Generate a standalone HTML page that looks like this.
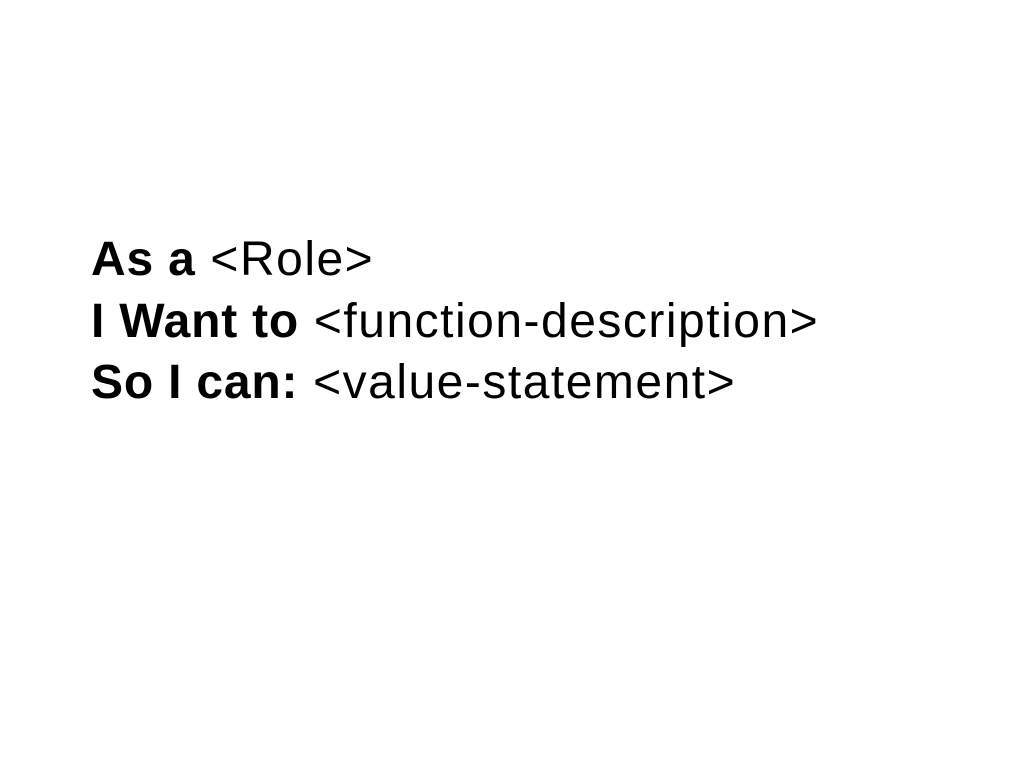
<!DOCTYPE html>
<html><head><style>
html,body{margin:0;padding:0;background:#fff;width:1024px;height:768px;overflow:hidden}
.t{position:absolute;left:91px;top:229px;font-family:"Liberation Sans",sans-serif;font-size:48px;line-height:61.5px;letter-spacing:1.5px;color:#000;white-space:nowrap}
b{font-weight:bold;letter-spacing:0.8px}
</style></head><body>
<div class="t"><b>As a</b> &lt;Role&gt;<br><b>I Want to</b> &lt;function-description&gt;<br><b>So I can:</b> &lt;value-statement&gt;</div>
</body></html>
